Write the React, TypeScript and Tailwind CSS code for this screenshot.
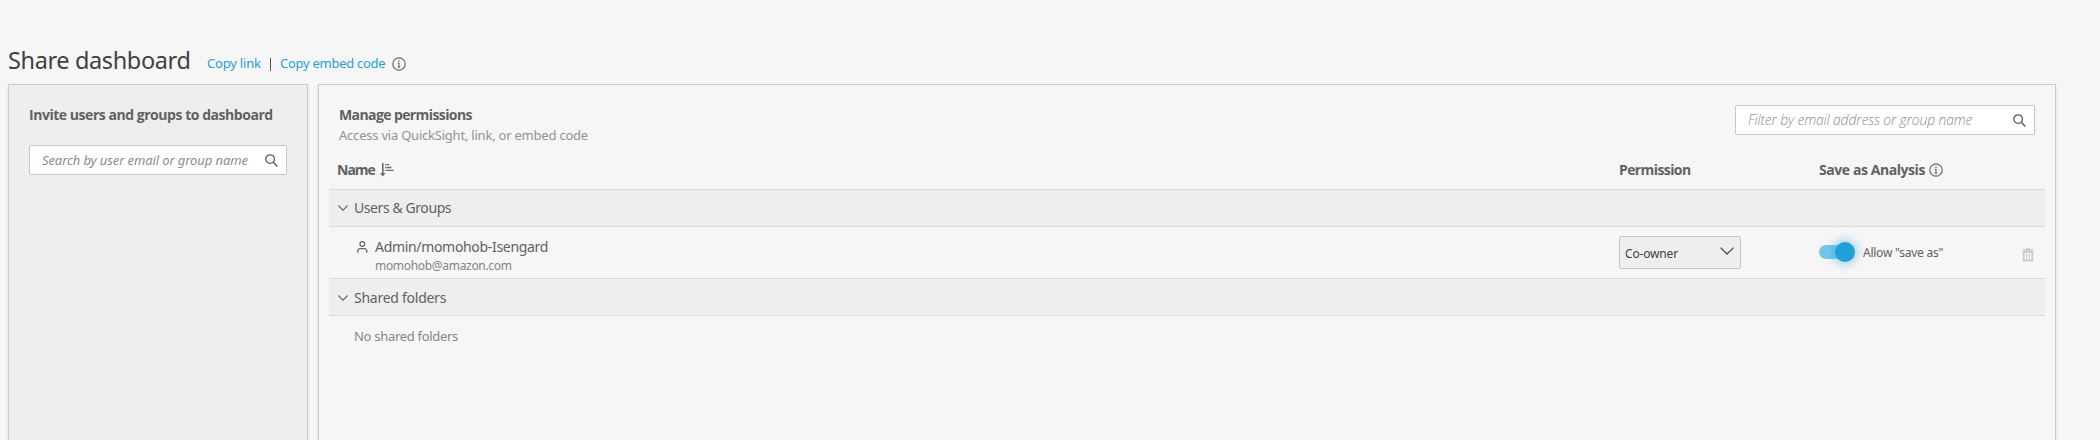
import React from "react";

const InfoIcon = () => (
  <svg width="14" height="14" viewBox="0 0 14 14" className="shrink-0">
    <circle cx="7" cy="7" r="6.2" fill="none" stroke="#6a6a6a" strokeWidth="1.2" />
    <rect x="6.3" y="3.4" width="1.4" height="1.4" fill="#6a6a6a" />
    <path d="M5.7 6.2h1.3v4M5.7 10.1h2.6" fill="none" stroke="#6a6a6a" strokeWidth="1.1" />
  </svg>
);

const SearchIcon = () => (
  <svg width="13" height="13" viewBox="0 0 13 13" className="shrink-0">
    <circle cx="5.1" cy="5.1" r="4.3" fill="none" stroke="#5a5a5a" strokeWidth="1.3" />
    <path d="M8.2 8.2l4.2 4.2" stroke="#5a5a5a" strokeWidth="1.4" />
  </svg>
);

const SortIcon = () => (
  <svg width="14" height="14" viewBox="0 0 14 14" className="shrink-0">
    <path d="M2.8 0v11" stroke="#6a6a6a" strokeWidth="1.6" />
    <path d="M0 10h5.6L2.8 13.4z" fill="#6a6a6a" />
    <path d="M5 1.6h4.2M5 4.5h6.4M5 7.4h8.6" stroke="#6a6a6a" strokeWidth="1.3" />
    <path d="M6.3 1v8" stroke="#f6f6f6" strokeWidth=".5" />
  </svg>
);

const Chevron = () => (
  <svg width="10" height="6" viewBox="0 0 10 6" className="shrink-0">
    <path d="M.4 .5L5 5.1 9.6 .5" fill="none" stroke="#666" strokeWidth="1.1" />
  </svg>
);

const UserIcon = () => (
  <svg width="11" height="12" viewBox="0 0 11 12" className="shrink-0">
    <circle cx="5.3" cy="3" r="2.4" fill="none" stroke="#666" strokeWidth="1.2" />
    <path d="M.8 11.8V10a2.3 2.3 0 0 1 2.3-2.3h4.4A2.3 2.3 0 0 1 9.8 10v1.8" fill="none" stroke="#666" strokeWidth="1.3" />
  </svg>
);

const TrashIcon = () => (
  <svg width="12" height="14" viewBox="0 0 12 14" className="shrink-0">
    <path d="M.5 2h11M4 .9h4" stroke="#c8c8c8" strokeWidth="1.3" />
    <path d="M1.7 4.2h8.6v8.1H1.7z" fill="none" stroke="#c8c8c8" strokeWidth="1.7" />
    <path d="M4.6 6v4.6M7.4 6v4.6" stroke="#c8c8c8" strokeWidth="1.2" />
  </svg>
);

function GroupRow({ children }: { children: React.ReactNode }) {
  return (
    <div className="flex h-[38px] items-center gap-1.5 border-y border-[#dadada] bg-[#eeeeee] pl-[9px] text-sm leading-5 text-[#616161] last-of-type:pt-[2px]">
      <Chevron />
      {children}
    </div>
  );
}

export default function App() {
  return (
    <div className="flex h-[440px] w-[2100px] flex-col overflow-hidden bg-[#f6f6f6] font-['Noto_Sans','Open_Sans',sans-serif] text-[#616161]">
      <header className="flex h-[84px] shrink-0 pt-[44px] pl-2">
        <h1 className="w-[199px] text-[23.5px] leading-8 tracking-[-0.38px] whitespace-nowrap text-[#414141]">Share dashboard</h1>
        <div className="flex h-5 items-center pt-[19px] pb-px text-[13px] leading-5 whitespace-nowrap text-[#1f9fd8]">
          <a className="w-[63px] tracking-[-0.2px]">Copy link</a>
          <span className="mt-0.5 mr-[9px] h-[13px] w-px bg-[#555555]" />
          <a className="w-[112px] tracking-[-0.27px]">Copy embed code</a>
          <div className="mt-0.5"><InfoIcon /></div>
        </div>
      </header>
      <main className="flex flex-1 gap-[10px] pl-2">
        <aside className="w-[300px] border border-b-0 border-[#cccccc] bg-[#eeeeee] px-5 pt-[20px] shadow-sm">
          <h2 className="font-['Open_Sans'] text-sm leading-5 font-bold tracking-[-0.46px] whitespace-nowrap">Invite users and groups to dashboard</h2>
          <div className="mt-5 flex h-[30px] w-[258px] items-center justify-between rounded-[2px] border border-[#c6c6c6] bg-white pr-2 pl-3">
            <span className="text-[13px] leading-5 tracking-[-0.1px] whitespace-nowrap text-[#8c8c8c] italic">Search by user email or group name</span>
            <SearchIcon />
          </div>
        </aside>
        <section className="w-[1738px] border border-b-0 border-[#cccccc] px-[10px] pt-5 shadow-sm">
          <div className="flex h-[50px] justify-between px-[10px]">
            <div className="whitespace-nowrap">
              <h2 className="font-['Open_Sans'] text-sm leading-5 font-bold tracking-[-0.6px]">Manage permissions</h2>
              <p className="text-[13px] leading-5 tracking-[-0.22px] text-[#929292]">Access via QuickSight, link, or embed code</p>
            </div>
            <div className="flex h-[30px] w-[300px] items-center justify-between rounded-[2px] border border-[#c6c6c6] bg-white pr-2 pl-3">
              <span className="font-['Open_Sans'] text-sm leading-5 font-light tracking-[-0.17px] whitespace-nowrap text-[#8c8c8c] italic">Filter by email address or group name</span>
              <SearchIcon />
            </div>
          </div>
          <div className="flex h-[34px] items-start pt-[5px] pl-2 font-['Open_Sans'] text-sm leading-5 font-bold whitespace-nowrap">
            <div className="flex w-[1282px] items-center gap-[5px]"><span className="tracking-[-1px]">Name</span><SortIcon /></div>
            <div className="w-[200px] tracking-[-0.6px]">Permission</div>
            <div className="flex items-center gap-1"><span className="tracking-[-0.43px]">Save as Analysis</span><InfoIcon /></div>
          </div>
          <GroupRow><span className="tracking-[-0.42px]">Users &amp; Groups</span></GroupRow>
          <div className="flex h-[51px] pl-7 whitespace-nowrap">
            <div className="flex w-[1262px] gap-2 pt-[10px]">
              <div className="pt-[4px]"><UserIcon /></div>
              <div className="-ml-px">
                <div className="text-sm leading-5 tracking-[-0.32px]">Admin/momohob-Isengard</div>
                <div className="text-xs leading-[18px] tracking-[-0.31px] text-[#858585]">momohob@amazon.com</div>
              </div>
            </div>
            <div className="w-[200px] pt-[9px]">
              <div className="flex h-[33px] w-[122px] items-center justify-between rounded-[2px] border border-[#c6c6c6] bg-[#eeeeee] pr-[6px] pl-[5px] text-xs leading-5 text-[#414141]">
                <span className="pt-[3px] tracking-[-0.16px]">Co-owner</span>
                <svg width="14" height="8" viewBox="0 0 14 8" className="mb-1"><path d="M.5 .6L7 7 13.5 .6" fill="none" stroke="#4a4a4a" strokeWidth="1.3" /></svg>
              </div>
            </div>
            <div className="flex w-[204px] items-start pt-[15px]">
              <div className="mt-[3px] flex h-[14px] w-[36px] items-center rounded-full bg-linear-to-r from-[#74c6ea] from-[31px] to-transparent to-[31px]">
                <span className="ml-4 size-5 shrink-0 rounded-full bg-[#209fd9] shadow-[0_0_10px_2px_rgba(32,159,217,0.45)]" />
              </div>
              <span className="mt-px ml-2 text-xs leading-5 tracking-[-0.25px]">Allow "save as"</span>
            </div>
            <div className="-ml-px pt-[21px]"><TrashIcon /></div>
          </div>
          <GroupRow><span className="tracking-[-0.26px]">Shared folders</span></GroupRow>
          <p className="pt-[10px] pl-[25px] text-[13px] leading-5 tracking-[-0.3px] text-[#858585]">No shared folders</p>
        </section>
      </main>
    </div>
  );
}
